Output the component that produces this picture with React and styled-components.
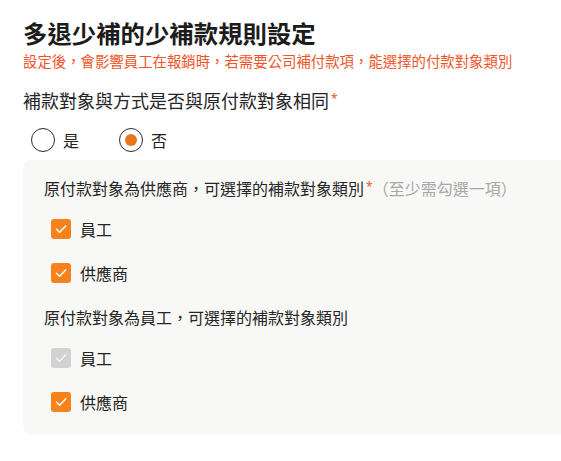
import styled, { createGlobalStyle } from "styled-components";

const GlobalStyle = createGlobalStyle`
  body {
    margin: 0;
    background: #ffffff;
    font-family: "Noto Sans", "Noto Sans CJK TC", sans-serif;
    color: #222;
    overflow: hidden;
  }
`;

const Page = styled.div`
  padding: 18px 0 0 23px;
`;

const Title = styled.h1`
  margin: 0;
  font-size: 24.4px;
  line-height: 32px;
  font-weight: 600;
  color: #1c1c1c;
`;

const Subtitle = styled.p`
  margin: 2px 0 0;
  font-size: 14.4px;
  line-height: 20px;
  color: #f0552a;
`;

const Label = styled.div`
  margin-top: 16px;
  font-size: 18px;
  line-height: 26px;
  color: #262626;
`;

const Star = styled.span`
  color: #f0552a;
  font-size: 12px;
  vertical-align: top;
  position: relative;
  top: -2px;
  margin-left: 2px;
`;

const Hint = styled.span`
  color: #a8a8a8;
`;

const RadioGroup = styled.div`
  display: flex;
  gap: 40px;
  margin: 14px 0 0 8px;
`;

const RadioItem = styled.label`
  display: flex;
  align-items: center;
  gap: 8px;
  height: 24px;
  font-size: 16px;
  color: #222;
`;

const RadioCircle = styled.span`
  width: 24px;
  height: 24px;
  box-sizing: border-box;
  border: 1px solid #2a2a2a;
  border-radius: 50%;
  display: flex;
  align-items: center;
  justify-content: center;
  &::after {
    content: "";
    width: 12px;
    height: 12px;
    border-radius: 50%;
    background: ${(p) => (p.checked ? "#e8761a" : "transparent")};
  }
`;

const Panel = styled.div`
  margin-top: 8px;
  margin-right: -20px;
  background: #f8f8f7;
  border-radius: 8px;
  padding: 17px 0 20px 21px;
`;

const SectionTitle = styled.div`
  font-size: 16px;
  line-height: 24px;
  color: #262626;
  margin-top: ${(p) => (p.first ? "0" : "21px")};
`;

const CheckList = styled.div`
  display: flex;
  flex-direction: column;
  gap: 20px;
  margin: 16px 0 0 7px;
`;

const CheckItem = styled.label`
  display: flex;
  align-items: center;
  gap: 9px;
  height: 24px;
  font-size: 16px;
  color: #222;
`;

const Box = styled.span`
  width: 20px;
  height: 20px;
  border-radius: 3px;
  background: ${(p) => (p.disabled ? "#d2d2d2" : "#f7821b")};
  display: flex;
  align-items: center;
  justify-content: center;
`;

const Check = ({ disabled }) => (
  <Box disabled={disabled}>
    <svg width="14" height="14" viewBox="0 0 14 14" fill="none">
      <path
        d="M2.5 7.3 L5.6 10.2 L11.6 3.9"
        stroke={disabled ? "#f4f4f4" : "#ffffff"}
        strokeWidth="1.5"
        strokeLinecap="round"
        strokeLinejoin="round"
      />
    </svg>
  </Box>
);

const sections = [
  {
    title: "原付款對象為供應商，可選擇的補款對象類別",
    required: true,
    items: [{ name: "員工" }, { name: "供應商" }],
  },
  {
    title: "原付款對象為員工，可選擇的補款對象類別",
    required: false,
    items: [{ name: "員工", disabled: true }, { name: "供應商" }],
  },
];

export default function App() {
  return (
    <Page>
      <GlobalStyle />
      <Title>多退少補的少補款規則設定</Title>
      <Subtitle>
        設定後，會影響員工在報銷時，若需要公司補付款項，能選擇的付款對象類別
      </Subtitle>
      <Label>
        補款對象與方式是否與原付款對象相同<Star>*</Star>
      </Label>
      <RadioGroup>
        <RadioItem>
          <RadioCircle />是
        </RadioItem>
        <RadioItem>
          <RadioCircle checked />否
        </RadioItem>
      </RadioGroup>
      <Panel>
        {sections.map((s, i) => (
          <div key={i}>
            <SectionTitle first={i === 0}>
              {s.title}
              {s.required && (
                <>
                  <Star>*</Star>
                  <Hint>（至少需勾選一項）</Hint>
                </>
              )}
            </SectionTitle>
            <CheckList>
              {s.items.map((it) => (
                <CheckItem key={it.name}>
                  <Check disabled={it.disabled} />
                  {it.name}
                </CheckItem>
              ))}
            </CheckList>
          </div>
        ))}
      </Panel>
    </Page>
  );
}
